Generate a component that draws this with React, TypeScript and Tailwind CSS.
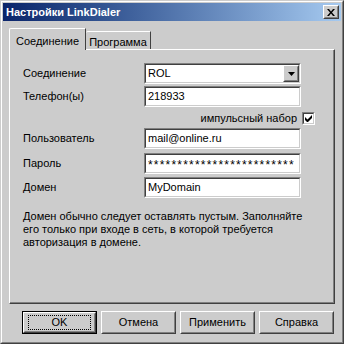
import React from 'react';

const font = { fontFamily: '"Liberation Sans", Arial, sans-serif' };

// sunken edit box in the classic style
function Field({ children, className = '' }: { children?: React.ReactNode; className?: string }) {
  return (
    <div className={`h-[21px] w-[157px] border border-t-[#808080] border-l-[#808080] border-b-white border-r-white ${className}`}>
      <div className="flex h-full items-center border border-t-[#404040] border-l-[#404040] border-b-[#cccccc] border-r-[#cccccc] bg-white pl-[2px] text-[11px] text-black">
        {children}
      </div>
    </div>
  );
}

function Raised({ children, className = '' }: { children?: React.ReactNode; className?: string }) {
  return (
    <div className={`border border-t-white border-l-white border-b-[#404040] border-r-[#404040] ${className}`}>
      <div className="flex h-full w-full items-center justify-center border border-t-[#cccccc] border-l-[#cccccc] border-b-[#808080] border-r-[#808080] bg-[#cccccc]">
        {children}
      </div>
    </div>
  );
}

function Row({ label, children }: { label: string; children: React.ReactNode }) {
  return (
    <div className="flex items-center">
      <div className="w-[121px] text-[11px] text-black">{label}</div>
      {children}
    </div>
  );
}

function DialogButton({ label, isDefault }: { label: string; isDefault?: boolean }) {
  if (isDefault) {
    return (
      <div className="h-[23px] w-[75px] border border-black">
        <Raised className="h-full w-full">
          <div className="flex h-[15px] w-[63px] items-center justify-center border border-dotted border-black text-[11px] text-black">
            {label}
          </div>
        </Raised>
      </div>
    );
  }
  return (
    <Raised className="h-[23px] w-[75px]">
      <span className="text-[11px] text-black">{label}</span>
    </Raised>
  );
}

export default function App() {
  return (
    <div style={font} className="h-[344px] w-[344px] border border-t-[#cccccc] border-l-[#cccccc] border-b-[#404040] border-r-[#404040]">
      <div className="h-full w-full border border-t-white border-l-white border-b-[#808080] border-r-[#808080] bg-[#cccccc] p-px">
        {/* Title bar */}
        <div className="flex h-[18px] items-center justify-between bg-gradient-to-r from-[#0a246a] to-[#a6caf0] pl-[3px] pr-[2px]">
          <span className="text-[11px] font-bold text-white">Настройки LinkDialer</span>
          <Raised className="h-[14px] w-[16px]">
            <svg width="8" height="7" viewBox="0 0 8 7">
              <path d="M0 0h2l2 2.5L6 0h2L5 3.5 8 7H6L4 4.5 2 7H0l3-3.5z" fill="black" />
            </svg>
          </Raised>
        </div>

        <div className="px-[6px] pt-[7px]">
          {/* Tabs */}
          <div className="flex h-[21px] items-end">
            <div className="relative z-10 -mb-px flex h-[22px] w-[77px] items-start justify-center rounded-tl-[2px] border-l border-t border-r border-l-white border-t-white border-r-[#404040] bg-[#cccccc] pt-[4px] text-[11px] text-black">
              Соединение
            </div>
            <div className="flex h-[18px] w-[65px] items-start justify-center rounded-tl-[2px] border-t border-r border-t-white border-r-[#404040] pt-[2px] text-[11px] text-black">
              Программа
            </div>
          </div>

          {/* Panel */}
          <div className="h-[255px] border border-t-white border-l-white border-b-[#404040] border-r-[#404040]">
            <div className="h-full border-b border-r border-b-[#808080] border-r-[#808080] pl-[13px] pt-[13px]">
              <div className="flex flex-col">
                <Row label="Соединение">
                  <Field>
                    <span className="flex-1">ROL</span>
                    <Raised className="h-[17px] w-[16px]">
                      <svg width="7" height="4" viewBox="0 0 7 4">
                        <path d="M0 0h7L3.5 4z" fill="black" />
                      </svg>
                    </Raised>
                  </Field>
                </Row>
                <div className="mt-[2px]">
                  <Row label="Телефон(ы)">
                    <Field>218933</Field>
                  </Row>
                </div>
                <div className="mt-[5px] flex h-[13px] items-center justify-end pr-[18px]">
                  <span className="mr-[5px] text-[11px] text-black">импульсный набор</span>
                  <div className="h-[13px] w-[13px] border border-t-[#808080] border-l-[#808080] border-b-white border-r-white">
                    <div className="flex h-full w-full items-center justify-center border border-t-[#404040] border-l-[#404040] border-b-[#cccccc] border-r-[#cccccc] bg-white">
                      <svg width="7" height="7" viewBox="0 0 7 7">
                        <path d="M0 2v3l2 2h1l4-4V0L2.5 4.5z" fill="black" />
                      </svg>
                    </div>
                  </div>
                </div>
                <div className="mt-[3px]">
                  <Row label="Пользователь">
                    <Field>mail@online.ru</Field>
                  </Row>
                </div>
                <div className="mt-[4px]">
                  <Row label="Пароль">
                    <Field>
                      <span className="overflow-hidden whitespace-nowrap pt-[3px] text-[12px] tracking-[1.2px]">*************************</span>
                    </Field>
                  </Row>
                </div>
                <div className="mt-[3px]">
                  <Row label="Домен">
                    <Field>MyDomain</Field>
                  </Row>
                </div>
                <p className="mt-[12px] w-[295px] text-[11px] leading-[13px] text-black">
                  Домен обычно следует оставлять пустым. Заполняйте его только при входе в сеть, в которой требуется авторизация в домене.
                </p>
              </div>
            </div>
          </div>

          {/* Buttons */}
          <div className="mt-[7px] flex justify-end gap-[4px] pr-[1px]">
            <DialogButton label="OK" isDefault />
            <DialogButton label="Отмена" />
            <DialogButton label="Применить" />
            <DialogButton label="Справка" />
          </div>
        </div>
      </div>
    </div>
  );
}
